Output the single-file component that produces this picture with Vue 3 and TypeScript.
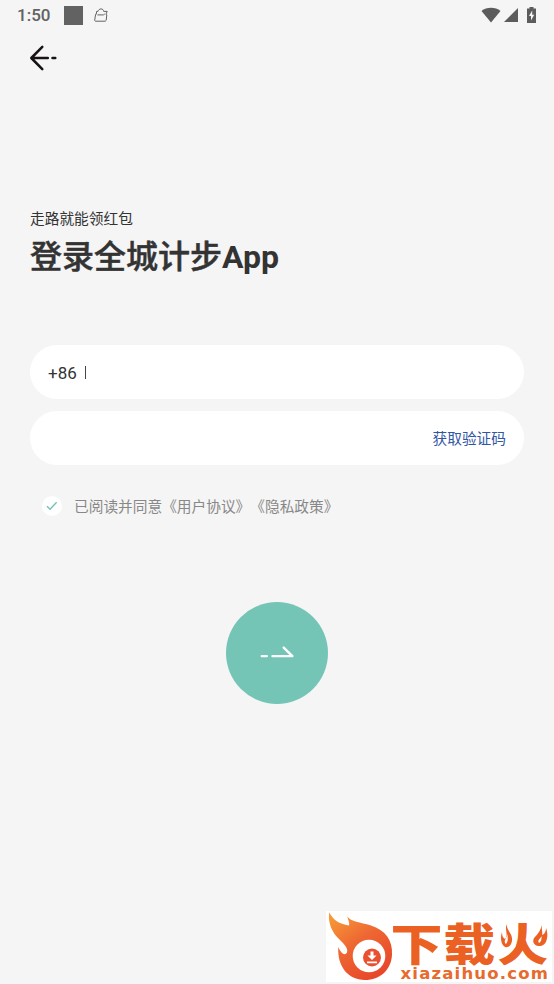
<script setup lang="ts">
import { ref } from 'vue'

const phone = ref('')
const code = ref('')
const agreed = ref(true)
</script>

<template>
  <main class="screen">
    <header class="status">
      <span class="time">1:50</span>
      <span class="square"></span>
      <svg class="bag" viewBox="0 0 14 14">
        <path d="M4 3.400H2.700L2.200 6.300H1.600L.7 12.300l.6.900h9.900l1-.9.600-5.500-.900-.5L13.200 3.400H9.700C9.400.1 4.800.1 4 3.400ZM3.400 6.900h6l1.400-.9" />
      </svg>
      <span class="spacer"></span>
      <svg class="wifi" viewBox="0 0 20 16"><path d="M.5 4C5.500-.3 14.500-.3 19.500 4L10 15.500Z" /></svg>
      <svg class="signal" viewBox="0 0 14 14"><path d="M14 0v14H0Z" /></svg>
      <svg class="battery" viewBox="0 0 9 16">
        <path d="M2.500 0h4v1.500H9V16H0V1.500h2.500Z" />
        <path class="bolt" d="M5.200 3.500 2 9h2v4.500L7.200 7.700h-2Z" />
      </svg>
    </header>

    <nav class="nav">
      <button class="back" type="button">
        <svg viewBox="0 0 30 28"><path d="M13.300 2.800 2.300 14l11 11.200M2.500 14h16.300M23.500 14h2.800" /></svg>
      </button>
    </nav>

    <section class="intro">
      <p class="subtitle">走路就能领红包</p>
      <h1 class="title">登录全城计步<b>App</b></h1>
    </section>

    <form class="form" @submit.prevent>
      <label class="field">
        <span class="prefix">+86</span>
        <span class="divider"></span>
        <input v-model="phone" class="input" type="tel" />
      </label>
      <label class="field">
        <input v-model="code" class="input" type="text" />
        <button class="send" type="button">获取验证码</button>
      </label>
      <div class="agree" @click="agreed = !agreed">
        <span class="check">
          <svg v-if="agreed" viewBox="0 0 20 20"><path d="m5 10.300 3.100 3 6.500-7" /></svg>
        </span>
        <span class="terms">已阅读并同意《用户协议》《隐私政策》</span>
      </div>
      <button class="submit" type="submit">
        <svg viewBox="0 0 36 14"><path d="M2.800 11.100h5M13.500 11.100h19.900L24.700 2.600" /></svg>
      </button>
    </form>

    <svg class="brand" viewBox="0 0 226 71">
      <defs>
        <linearGradient id="fire" x1="0" y1="0" x2=".65" y2="1">
          <stop offset="0" stop-color="#f8a037" />
          <stop offset=".5" stop-color="#ee6833" />
          <stop offset="1" stop-color="#e8472a" />
        </linearGradient>
      </defs>
      <path fill="url(#fire)" d="M3.300 1.300C7 9 13 13 23 14.500C24 12 22 9 21.300 5.500C25 11 34 11 45 14.500C59 19 67 29 66 44C65 59 54 69 39 69C22 69 11 55 12.300 36C15 43 19 45 21 41.500C22.500 37 18 33 11 26C4 18 2 9 3.300 1.300Z" />
      <circle cx="43" cy="45" r="16.300" fill="#fff" />
      <circle cx="46" cy="46.500" r="9" fill="#e95030" />
      <path fill="#fff" d="M44.500 40.500h3v4h3L46 49l-4.500-4.500h3ZM41 50.500h10v1.800H41Z" />
      <g class="brand-name">
        <text transform="translate(64.500 50) scale(1.130 .970)">下</text>
        <text transform="translate(117.500 50) scale(1.120 .970)">载</text>
        <text transform="translate(171.500 50) scale(1.100 .970)">火</text>
      </g>
      <path fill="#fff" d="M171 15h18.500v21l-4 4h-15ZM204 15h21v25h-14l-6-8Z" />
      <path class="flame" d="M181 13c-1 7 6 9 5 17-1 5-4 7-7 6-4-2-5-9-3-15 0 4 1 6 3 7 4-4-1-10 2-15ZM216 13c-1 5 1 7 0 11 3-1 4-4 4-7 3 7 1 18-6 18-6 0-8-4-6-8 4-4 7-8 8-14Z" />
      <path fill="#fff" d="M182 23c-1 4 1 6-2 10-3-3 0-5 2-10ZM216 25c-1 3 0 5-3 7-2-3 1-4 3-7Z" />
      <text class="domain" transform="translate(74.500 67.500) scale(1.100 1)" textLength="134">xiazaihuo.com</text>
    </svg>
  </main>
</template>

<style>
body {
  margin: 0;
  background: #f5f5f5;
}
</style>

<style scoped>
.screen {
  position: relative;
  box-sizing: border-box;
  width: 554px;
  height: 984px;
  overflow: hidden;
  background: #f5f5f5;
  color: #333;
  font-family: Roboto, "Noto Sans CJK SC", sans-serif;
}
svg {
  display: block;
}
button {
  border: 0;
  padding: 0;
  background: none;
  font: inherit;
  cursor: pointer;
}
.status {
  display: flex;
  align-items: center;
  box-sizing: border-box;
  height: 30px;
  padding: 0 18px 0 17px;
  color: #626262;
}
.time {
  width: 47px;
  font-size: 17px;
  font-weight: 500;
  line-height: 30px;
}
.square {
  width: 19px;
  height: 19px;
  background: #626262;
}
.bag {
  width: 14px;
  height: 14px;
  margin-left: 11px;
  fill: none;
  stroke: #626262;
  stroke-width: 1;
}
.spacer {
  flex: 1;
}
.wifi,
.signal,
.battery {
  fill: #5c5c5c;
}
.wifi {
  width: 20px;
  height: 16px;
}
.signal {
  width: 14px;
  height: 14px;
  margin-left: 3px;
}
.battery {
  width: 9px;
  height: 16px;
  margin-left: 9px;
}
.battery .bolt {
  fill: #f5f5f5;
}
.nav {
  padding: 14px 29px 0;
}
.back {
  display: block;
}
.back svg {
  width: 30px;
  height: 28px;
  fill: none;
  stroke: #181212;
  stroke-width: 2.5;
  stroke-linecap: round;
  stroke-linejoin: round;
}
.intro {
  padding: 137px 30px 0;
}
.subtitle {
  margin: 0;
  font-size: 14.7px;
  line-height: 20px;
}
.title {
  margin: 5px 0 0;
  font-size: 32px;
  font-weight: 500;
  line-height: 46px;
  -webkit-text-stroke: 0.5px #333;
}
.title b {
  font-weight: 700;
  -webkit-text-stroke: 0;
}
.form {
  display: flex;
  flex-direction: column;
  padding: 65px 30px 0;
}
.field {
  display: flex;
  align-items: center;
  box-sizing: border-box;
  height: 54px;
  margin-bottom: 12px;
  padding: 0 18px;
  border-radius: 27px;
  background: #fff;
}
.prefix {
  padding-top: 2px;
  font-size: 17px;
}
.divider {
  width: 1px;
  height: 13px;
  margin-left: 8px;
  background: #444;
}
.input {
  flex: 1;
  min-width: 0;
  border: 0;
  outline: 0;
  background: none;
  font: inherit;
}
.send {
  padding-bottom: 2px;
  color: #3156a3;
  font-size: 14.7px;
}
.agree {
  display: flex;
  align-items: center;
  height: 20px;
  margin-top: 19px;
  padding-left: 12px;
  gap: 12px;
  color: #888;
  font-size: 14.7px;
  white-space: nowrap;
}
.terms {
  padding-bottom: 2px;
  text-spacing-trim: space-all;
}
.check {
  width: 20px;
  height: 20px;
  border-radius: 50%;
  background: #fff;
}
.check svg {
  fill: none;
  stroke: #75c4b5;
  stroke-width: 1.4;
}
.submit {
  display: grid;
  place-items: center;
  align-self: center;
  width: 102px;
  height: 102px;
  margin-top: 86px;
  border-radius: 50%;
  background: #75c5b6;
}
.submit svg {
  width: 36px;
  height: 14px;
  margin-top: -2px;
  fill: none;
  stroke: #fff;
  stroke-width: 2.4;
  stroke-linecap: round;
  stroke-linejoin: round;
}
.brand {
  position: absolute;
  right: 2px;
  bottom: 2px;
  width: 226px;
  height: 71px;
  overflow: visible;
  background: #fff;
}
.brand-name {
  fill: #eb6124;
  font-family: "Noto Sans CJK SC", sans-serif;
  font-size: 46px;
  font-weight: 900;
}
.flame {
  fill: #eb6124;
}
.domain {
  fill: #e86a2c;
  font-family: "DejaVu Sans", sans-serif;
  font-size: 15px;
  font-weight: 700;
}
</style>
